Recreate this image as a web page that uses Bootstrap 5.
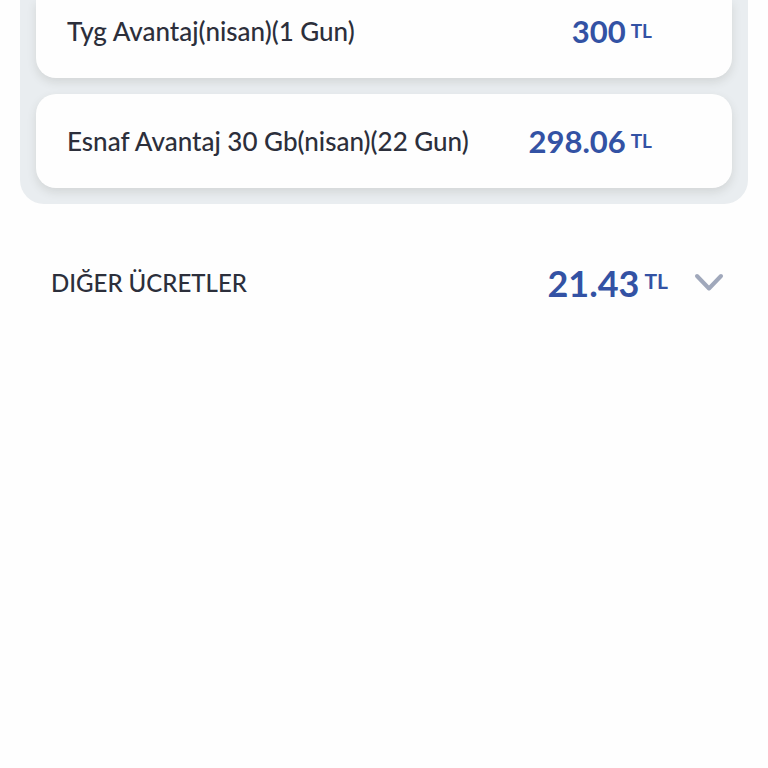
<!DOCTYPE html>
<html lang="tr">
<head>
<meta charset="utf-8">
<meta name="viewport" content="width=device-width, initial-scale=1">
<title>Ücretler</title>
<link href="https://cdn.jsdelivr.net/npm/bootstrap@5.3.0/dist/css/bootstrap.min.css" rel="stylesheet">
<style>
  body { font-family: Lato, "Open Sans", sans-serif; color: #2c2f3b; background: #fefefe; }
  .fee-page { padding: 0 20px; }
  .fee-group { background: #e9edf0; border-radius: 0 0 24px 24px; padding: 0 16px 16px; gap: 16px; }
  .fee-item { background: #fefefe; border-radius: 20px; padding: 32px 80px 32px 31px; box-shadow: 0 4px 10px rgba(60, 60, 50, .13); }
  .fee-item-first { border-radius: 0 0 20px 20px; padding-top: 16px; }
  .fee-name { font-size: 26px; line-height: 30px; font-weight: 500; }
  .fee-price { color: #3352a4; font-weight: 700; font-size: 31px; line-height: 30px; gap: 5px; }
  .fee-unit { font-size: 19px; }
  .fee-toggle { color: inherit; padding: 56px 24px 56px 31px; }
  .fee-toggle .fee-name { font-size: 24px; }
  .fee-toggle .fee-price { font-size: 36px; line-height: 46px; gap: 5px; }
  .fee-toggle .fee-unit { font-size: 21px; line-height: 42px; }
  .fee-arrow { margin-left: 26px; }
</style>
</head>
<body>
<main class="fee-page">
  <ul class="fee-group list-unstyled d-flex flex-column mb-0">
    <li class="fee-item fee-item-first d-flex justify-content-between align-items-center">
      <span class="fee-name">Tyg Avantaj(nisan)(1 Gun)</span>
      <span class="fee-price d-flex align-items-center">300 <span class="fee-unit">TL</span></span>
    </li>
    <li class="fee-item d-flex justify-content-between align-items-center">
      <span class="fee-name">Esnaf Avantaj 30 Gb(nisan)(22 Gun)</span>
      <span class="fee-price d-flex align-items-center">298.06 <span class="fee-unit">TL</span></span>
    </li>
  </ul>
  <button type="button" class="fee-toggle w-100 border-0 bg-transparent d-flex align-items-center text-start" aria-expanded="false">
    <span class="fee-name me-auto">DIĞER ÜCRETLER</span>
    <span class="fee-price d-flex align-items-start">21.43 <span class="fee-unit">TL</span></span>
    <svg class="fee-arrow" width="30" height="20" viewBox="0 0 30 20" fill="none" stroke="#a0a8bb" stroke-width="4" stroke-linecap="round" stroke-linejoin="round" aria-hidden="true"><path d="M3 3 L15 15.5 L27 3"/></svg>
  </button>
</main>
<script src="https://cdn.jsdelivr.net/npm/bootstrap@5.3.0/dist/js/bootstrap.bundle.min.js"></script>
</body>
</html>
